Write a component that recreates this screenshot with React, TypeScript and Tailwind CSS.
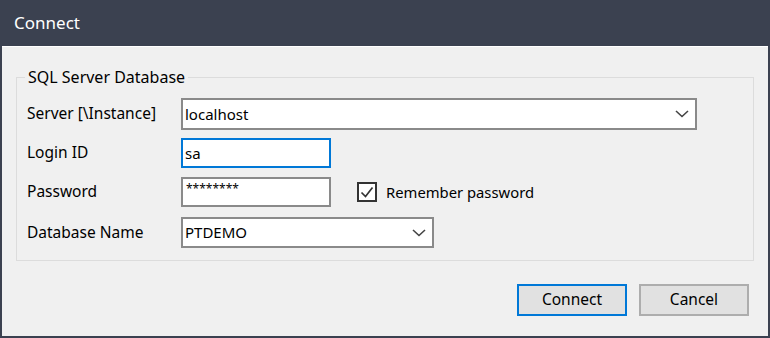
import React from 'react';

const font = { fontFamily: '"Noto Sans", "Open Sans", sans-serif' };

function Chevron() {
  return (
    <svg width="14" height="8" viewBox="0 0 14 8" className="shrink-0">
      <path d="M1 1l6 5.5L13 1" fill="none" stroke="#444" strokeWidth="1.6" />
    </svg>
  );
}

function Combo({ value, width, height }: { value: string; width: string; height: string }) {
  return (
    <div
      className={`flex items-center justify-between border-2 border-[#8a8a8a] bg-white pl-[2px] pr-[6px] ${width} ${height}`}
    >
      <span className="text-[15px] text-black">{value}</span>
      <Chevron />
    </div>
  );
}

export default function App() {
  return (
    <div
      className="flex h-[338px] w-[770px] flex-col overflow-hidden border-x-2 border-b-2 border-[#3b4150] bg-[#f0f0f0]"
      style={font}
    >
      <div className="-mx-[2px] flex h-[46px] shrink-0 items-center bg-[#3b4150] px-[14px] text-[17px] text-white">
        Connect
      </div>
      <div className="flex flex-1 flex-col border-t border-white px-[14px] pt-[20px]">
        <fieldset className="h-[194px] border border-[#dcdcdc] pl-[10px] pr-[10px]">
          <legend className="ml-[-2px] px-[3px] text-[16px] leading-[20px] text-black">
            SQL Server Database
          </legend>
          <div className="mt-[11px] flex flex-col text-[15.5px] text-black">
            <div className="flex h-[32px] items-center">
              <span className="w-[154px]">Server [\Instance]</span>
              <Combo value="localhost" width="w-[516px]" height="h-[32px]" />
            </div>
            <div className="mt-[8px] flex h-[30px] items-center">
              <span className="w-[154px]">Login ID</span>
              <div className="flex h-[30px] w-[150px] items-center border-2 border-[#0078d7] bg-white pl-[2px] text-[15px]">
                sa
              </div>
            </div>
            <div className="mt-[9px] flex h-[30px] items-center">
              <span className="w-[154px]">Password</span>
              <div className="flex h-[30px] w-[150px] items-start border-2 border-[#8a8a8a] bg-white pl-[3px] pt-[4px] text-[12px] leading-[12px]">
                ********
              </div>
              <div className="ml-[26px] flex items-center gap-[9px]">
                <span className="flex h-[20px] w-[20px] items-center justify-center border-2 border-[#333] bg-white">
                  <svg width="14" height="12" viewBox="0 0 14 12">
                    <path d="M1.5 6.5l4 4L12.5 1.5" fill="none" stroke="#333" strokeWidth="1.7" />
                  </svg>
                </span>
                <span className="text-[14.8px]">Remember password</span>
              </div>
            </div>
            <div className="mt-[10px] flex h-[31px] items-center">
              <span className="w-[154px]">Database Name</span>
              <Combo value="PTDEMO" width="w-[253px]" height="h-[31px]" />
            </div>
          </div>
        </fieldset>
        <div className="mt-[23px] flex justify-end gap-[12px] pr-[5px] text-[15.5px] text-black">
          <button className="h-[32px] w-[110px] border-2 border-[#0078d7] bg-[#e1e1e1]">Connect</button>
          <button className="h-[32px] w-[110px] border-2 border-[#adadad] bg-[#e1e1e1]">Cancel</button>
        </div>
      </div>
    </div>
  );
}
